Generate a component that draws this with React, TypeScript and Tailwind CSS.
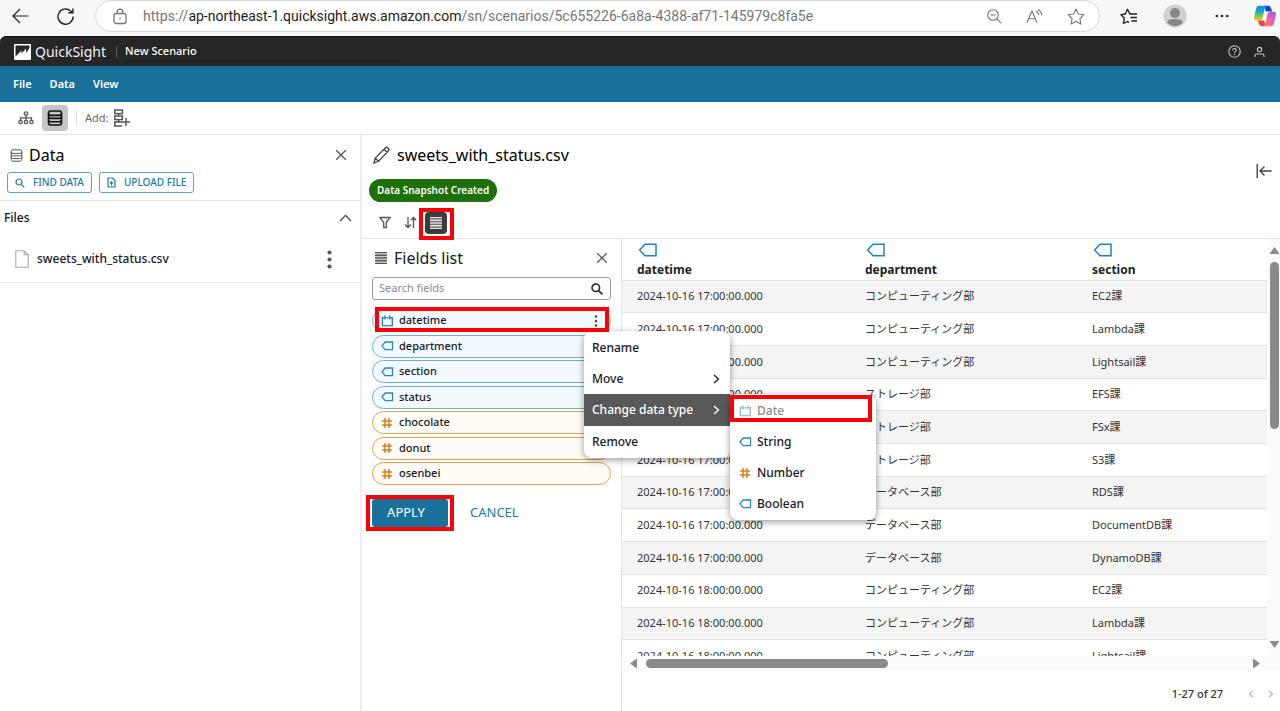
import React, { useState } from 'react';
import clsx from 'clsx';

type FieldType = 'date' | 'string' | 'number';

interface Field {
  name: string;
  type: FieldType;
}

const FIELDS: Field[] = [
  { name: 'datetime', type: 'date' },
  { name: 'department', type: 'string' },
  { name: 'section', type: 'string' },
  { name: 'status', type: 'string' },
  { name: 'chocolate', type: 'number' },
  { name: 'donut', type: 'number' },
  { name: 'osenbei', type: 'number' },
];

const ROWS = [
  ['2024-10-16 17:00:00.000', 'コンピューティング部', 'EC2課'],
  ['2024-10-16 17:00:00.000', 'コンピューティング部', 'Lambda課'],
  ['2024-10-16 17:00:00.000', 'コンピューティング部', 'Lightsail課'],
  ['2024-10-16 17:00:00.000', 'ストレージ部', 'EFS課'],
  ['2024-10-16 17:00:00.000', 'ストレージ部', 'FSx課'],
  ['2024-10-16 17:00:00.000', 'ストレージ部', 'S3課'],
  ['2024-10-16 17:00:00.000', 'データベース部', 'RDS課'],
  ['2024-10-16 17:00:00.000', 'データベース部', 'DocumentDB課'],
  ['2024-10-16 17:00:00.000', 'データベース部', 'DynamoDB課'],
  ['2024-10-16 18:00:00.000', 'コンピューティング部', 'EC2課'],
  ['2024-10-16 18:00:00.000', 'コンピューティング部', 'Lambda課'],
  ['2024-10-16 18:00:00.000', 'コンピューティング部', 'Lightsail課'],
];

interface IconProps {
  className?: string;
}

const Svg: React.FC<IconProps & { w: number; h: number; sw?: number; children: React.ReactNode }> = ({ w, h, sw = 1, className, children }) => (
  <svg
    width={w}
    height={h}
    viewBox={`0 0 ${w} ${h}`}
    fill="none"
    stroke="currentColor"
    strokeWidth={sw}
    className={clsx('shrink-0', className)}
    aria-hidden="true"
  >
    {children}
  </svg>
);

const TagIcon: React.FC<IconProps> = ({ className }) => (
  <Svg w={13} h={10} sw={1.3} className={className}>
    <path d="M4.2 1H11.500v7.600H4.2L1 4.800z" />
  </Svg>
);

const BigTagIcon: React.FC<IconProps> = ({ className }) => (
  <Svg w={20} h={14} sw={1.5} className={className}>
    <path d="M8 1.200H19v11.500H8L2.600 7z" />
  </Svg>
);

const DateIcon: React.FC<IconProps> = ({ className }) => (
  <Svg w={13} h={12} sw={1.4} className={className}>
    <path d="M3.500 2.800H1.400v7.800h9.900V2.800H9.200M5.300 2.800h2.100M4 .4v4M8.700 .4v4" />
  </Svg>
);

const HashIcon: React.FC<IconProps> = ({ className }) => (
  <Svg w={13} h={12} sw={1.500} className={className}>
    <path d="M4 1v10M8 1v10M1 4h10M1 8h10" />
  </Svg>
);

const DatabaseIcon: React.FC<IconProps & { size?: number; sw?: number }> = ({ className, size = 13, sw = 1.2 }) => (
  <svg width={size} height={size} viewBox="0 0 16 16" fill="none" stroke="currentColor" strokeWidth={(sw * 16) / size} className={clsx('shrink-0', className)}>
    <rect x="1.500" y="1" width="13" height="4.400" rx="2.200" />
    <path d="M1.500 3.400v9.400c0 1.200 1 2.200 2.200 2.200h8.600c1.200 0 2.200-1 2.200-2.200V3.400M1.500 6c0 1.600 1 2.400 2.600 2.400h7.800c1.600 0 2.600-.8 2.600-2.400M1.500 9.400c0 1.600 1 2.400 2.600 2.400h7.800c1.600 0 2.600-.8 2.600-2.400" />
  </svg>
);

const CloseIcon: React.FC<IconProps> = ({ className }) => (
  <Svg w={12} h={12} sw={1.3} className={className}>
    <path d="M1.2 1.2l9.6 9.6M10.8 1.2L1.2 10.8" />
  </Svg>
);

const SearchIcon: React.FC<IconProps> = ({ className }) => (
  <Svg w={12} h={12} sw={1.5} className={className}>
    <circle cx="4.8" cy="4.8" r="3.8" />
    <path d="M7.6 7.6l3.8 3.8" />
  </Svg>
);

const ListIcon: React.FC<IconProps> = ({ className }) => (
  <Svg w={14} h={14} sw={1.4} className={className}>
    <path d="M1 1.600h12M1 4.300h12M1 7h12M1 9.700h12M1 12.400h12" />
    <path d="M1.500 3h11M1.500 5.700h11M1.500 8.400h11M1.500 11h11" strokeWidth="1" opacity=".4" />
  </Svg>
);

const ChevronRight: React.FC<IconProps> = ({ className }) => (
  <Svg w={7} h={10} sw={1.3} className={className}>
    <path d="M1 1l4.5 4L1 9" />
  </Svg>
);

const KebabIcon: React.FC<IconProps> = ({ className }) => (
  <svg width="4" height="14" viewBox="0 0 4 14" fill="currentColor" className={className}>
    <circle cx="2" cy="2.500" r="1.200" />
    <circle cx="2" cy="7" r="1.200" />
    <circle cx="2" cy="11.500" r="1.200" />
  </svg>
);

const TypeIcon: React.FC<{ type: FieldType; className?: string }> = ({ type, className }) => {
  if (type === 'date') return <DateIcon className={clsx('text-[#2a85c0]', className)} />;
  if (type === 'string') return <TagIcon className={clsx('text-[#2a85c0]', className)} />;
  return <HashIcon className={clsx('text-[#d38320]', className)} />;
};

// red frame drawn over the controls used in this step
const Highlight: React.FC<IconProps> = ({ className }) => (
  <span className={clsx('absolute z-30 border-4 border-[#fb0007] pointer-events-none', className)} />
);

const BrowserBar = () => (
  <div className="flex items-start h-9 shrink-0 bg-[#f7f7f7] text-[#222]">
    <button type="button" aria-label="Back" className="ml-3 mt-2">
      <Svg w={17} h={16} sw={1.2}>
        <path d="M16.5 8H1M8 1L1 8l7 7" />
      </Svg>
    </button>
    <button type="button" aria-label="Refresh" className="ml-7 mt-2">
      <Svg w={18} h={17} sw={1.4}>
        <path d="M16.200 8.500A7.600 7.600 0 1 1 13.400 2.700L15.600 4.600M15.900.4v4.400h-4.600" />
      </Svg>
    </button>
    <div className="ml-5 mr-5 flex-1 min-w-0 h-8 flex items-center rounded-full border border-[#d6d6d6] bg-white text-[#767676]">
      <Svg w={14} h={17} sw={1.3} className="ml-[17px]">
        <rect x="1" y="5.5" width="12" height="10" rx="2" />
        <path d="M4.2 5.5V4a2.8 2.8 0 0 1 5.6 0v1.5" />
        <circle cx="7" cy="10.5" r=".8" fill="currentColor" stroke="none" />
      </Svg>
      <div className="ml-4 flex-1 min-w-0 truncate font-['Roboto',sans-serif] text-sm">
        https://<span className="text-[#1b1b1b]">ap-northeast-1.quicksight.aws.amazon.com</span>/sn/scenarios/5c655226-6a8a-4388-af71-145979c8fa5e
      </div>
      <div className="flex items-center gap-6 mr-[14px]">
        <button type="button" aria-label="Zoom out">
          <Svg w={15} h={15} sw={1.1}>
            <circle cx="6" cy="6" r="5.3" />
            <path d="M3.4 6h5.2M9.8 9.8l4.6 4.6" />
          </Svg>
        </button>
        <button type="button" aria-label="Read aloud">
          <Svg w={17} h={15} sw={1.1}>
            <path d="M1 13.8L6 2l5 11.8M2.8 9.8h6.4M10 2.200c1.500.8 2.600 2 2.900 4M12 .5c2 1 3.500 3 3.900 6" />
          </Svg>
        </button>
        <button type="button" aria-label="Favorite">
          <Svg w={18} h={17} sw={1.1}>
            <path d="M9 1l2.4 5 5.6.7-4.1 3.8 1 5.5L9 13.4 4.1 16l1-5.5L1 6.7 6.600 6z" strokeLinejoin="round" />
          </Svg>
        </button>
      </div>
    </div>
    <div className="flex items-center h-8">
      <button type="button" aria-label="Favorites">
        <Svg w={18} h={17} sw={1.4}>
          <path d="M11.2 6L9.800 6 7.500 1.300 5.300 6 1 6.700l3.300 3.500-.8 5.300 3.900-2 1.600.8" strokeLinejoin="round" />
          <path d="M11 6h6M10.500 9.500h6.500M11.500 13h5.500" />
        </Svg>
      </button>
      <button type="button" aria-label="Profile" className="ml-[25px]">
        <svg width="24" height="24" viewBox="0 0 24 24">
          <circle cx="12" cy="12" r="11.500" fill="#d2d0ce" />
          <circle cx="12" cy="9" r="5" fill="#8a8683" />
          <path d="M4 18.500c.6-2.400 3.400-3.500 8-3.500s7.400 1.100 8 3.500a11 11 0 0 1-16 0z" fill="#8a8683" />
        </svg>
      </button>
      <button type="button" aria-label="More" className="ml-7">
        <svg width="14" height="4" viewBox="0 0 14 4" fill="currentColor">
          <circle cx="1.800" cy="2" r="1.300" />
          <circle cx="7" cy="2" r="1.300" />
          <circle cx="12.200" cy="2" r="1.300" />
        </svg>
      </button>
      <button type="button" aria-label="Copilot" className="ml-6 mr-[3px]">
        <svg width="24" height="22" viewBox="0 0 24 22">
          <defs>
            <linearGradient id="cpA" x1="0" y1="0" x2="0" y2="1">
              <stop offset="0" stopColor="#0b8bea" />
              <stop offset=".45" stopColor="#23b5b0" />
              <stop offset=".8" stopColor="#b4c832" />
              <stop offset="1" stopColor="#f0c020" />
            </linearGradient>
            <linearGradient id="cpB" x1="1" y1="0" x2="0" y2="1">
              <stop offset="0" stopColor="#9a5cf5" />
              <stop offset=".5" stopColor="#ea5fa8" />
              <stop offset="1" stopColor="#ff9248" />
            </linearGradient>
          </defs>
          <path d="M11 .8h4.500c1.600 0 2.200 1.400 2.800 3.200l.9 2.600H13z" fill="#1746c8" />
          <path d="M6 .8h8c-1.500.6-2 2-2.600 4L9.500 13c-.6 1.800-1.500 2.600-3.500 2.600H4C1.500 15.600.6 14 1.200 11.500L3 4C3.600 1.800 4.500.8 6 .8z" fill="url(#cpA)" />
          <path d="M13 21.200H8.500c-1.500 0-2.200-1.300-2.700-3l-.9-2.600H11z" fill="#e8493c" />
          <path d="M18 21.200h-8c1.500-.6 2-2 2.600-4L14.500 9c.6-1.800 1.500-2.600 3.500-2.600h2c2.500 0 3.400 1.600 2.800 4.100L21 18c-.6 2.200-1.500 3.200-3 3.200z" fill="url(#cpB)" />
        </svg>
      </button>
    </div>
  </div>
);

const AppHeader = () => {
  const [title, setTitle] = useState('New Scenario');
  return (
    <div className="shrink-0 bg-[#f7f7f7]">
      <header className="h-[30px] flex items-center px-3 rounded-t-md border-t border-[#111] bg-[#262626] text-white">
        <svg width="18" height="18" viewBox="0 0 18 18" className="ml-[2px]">
          <rect x="0" y="1" width="17" height="16" rx="1" fill="#fff" />
          <path d="M1.500 2.500h14V5l-3.500 5V5.500L7.500 10.500V7.500l-6 6z" fill="#262626" />
        </svg>
        <span className="ml-[3px] text-sm text-[#f2f2f2]">QuickSight</span>
        <span className="ml-[10px] mr-2 h-3 w-px bg-[#5a5a5a]" />
        <input
          aria-label="Scenario name"
          value={title}
          onChange={(e) => setTitle(e.target.value)}
          className="w-[276px] h-5 pb-[2px] bg-transparent border-b border-[#1a1a1a] text-[11px] font-medium focus:outline-none"
        />
        <div className="ml-auto mr-[3px] flex items-center gap-[13px] text-[#c4c4c4]">
          <button type="button" aria-label="Help">
            <Svg w={13} h={13} sw={1.1}>
              <circle cx="6.500" cy="6.500" r="5.700" />
              <path d="M4.700 5.200c0-1 .8-1.700 1.800-1.700s1.800.7 1.800 1.600c0 1.200-1.800 1.300-1.800 2.600M6.500 8.800v1.200" />
            </Svg>
          </button>
          <button type="button" aria-label="Account">
            <Svg w={11} h={12} sw={1.2}>
              <circle cx="5.500" cy="3.500" r="2.200" />
              <path d="M1 11V9.800c0-1 .8-1.800 1.800-1.800h5.400c1 0 1.800.8 1.800 1.800V11" />
            </Svg>
          </button>
        </div>
      </header>
    </div>
  );
};

const Toolbar = () => (
  <div className="h-[33px] shrink-0 flex items-center px-[18px] border-b border-[#e3e3e3] text-[#555]">
    <button type="button" aria-label="Analysis map">
      <Svg w={16} h={14} sw={1.3}>
        <circle cx="8" cy="2.500" r="1.700" />
        <circle cx="2.500" cy="11" r="1.700" />
        <circle cx="8" cy="11" r="1.700" />
        <circle cx="13.500" cy="11" r="1.700" />
        <path d="M8 4.200v5.100M2.500 9.300V6.800h11v2.500" />
      </Svg>
    </button>
    <button type="button" aria-label="Data" className="ml-2 w-[26px] h-[26px] flex items-center justify-center rounded bg-[#c4c4c4] text-[#111]">
      <DatabaseIcon size={16} sw={1.6} />
    </button>
    <span className="ml-2 mr-2 h-4 w-px bg-[#ddd]" />
    <span className="text-[11px] text-[#666]">Add:</span>
    <button type="button" aria-label="Add block" className="ml-1">
      <Svg w={18} h={18} sw={1.5}>
        <rect x="1.800" y="1" width="7.600" height="3.600" />
        <rect x="1.800" y="7" width="7.600" height="3.600" />
        <path d="M5.600 4.600v2.400M5.600 10.600v2.400M9.400 13H1.800v4H9M13 9v8M9 13h8" />
      </Svg>
    </button>
  </div>
);

const DataPanel = () => (
  <aside className="w-[362px] shrink-0 border-r-2 border-[#eeeeee]">
    <div className="h-[66px] px-[7px] pt-2 border-b border-[#e3e3e3]">
      <div className="flex items-center h-6 pl-[3px] pr-[6px]">
        <DatabaseIcon size={13} sw={1} className="text-[#555]" />
        <h2 className="ml-[6px] text-base text-black">Data</h2>
        <button type="button" aria-label="Close data panel" className="ml-auto text-[#555]">
          <CloseIcon />
        </button>
      </div>
      <div className="mt-[5px] flex gap-[7px] text-[#1b7ba6]">
        <button type="button" className="h-[21px] px-[7px] flex items-center rounded-[3px] border border-[#5ea3c2] text-[10px] font-medium">
          <Svg w={10} h={10} sw={1.200}>
            <circle cx="4" cy="4" r="3" />
            <path d="M6.300 6.300l3 3" />
          </Svg>
          <span className="ml-2">FIND DATA</span>
        </button>
        <button type="button" className="h-[21px] px-[7px] flex items-center rounded-[3px] border border-[#5ea3c2] text-[10px] font-medium">
          <Svg w={9} h={11} sw={1.200}>
            <path d="M1 1h4.500L8 3.500V10H1zM4.500 8.500V5M3 6.300L4.500 4.800 6 6.300" />
          </Svg>
          <span className="ml-2">UPLOAD FILE</span>
        </button>
      </div>
    </div>
    <div className="h-[82px] pl-1 border-b border-[#e3e3e3]">
      <div className="h-[34px] flex items-center justify-between pr-2">
        <h3 className="text-xs font-medium text-[#111]">Files</h3>
        <button type="button" aria-label="Collapse files" className="text-[#444]">
          <Svg w={13} h={8} sw={1.300}>
            <path d="M1 7l5.500-5.600L12 7" />
          </Svg>
        </button>
      </div>
      <div className="h-12 flex items-center pl-[11px] pr-7">
        <Svg w={14} h={18} sw={1.100} className="text-[#aaa]">
          <path d="M.8.8h8.400l4 4v12.400H.8zM9.200.8v4h4" />
        </Svg>
        <a href="#file" className="ml-2 text-xs font-medium text-[#16191f]">sweets_with_status.csv</a>
        <button type="button" aria-label="File options" className="ml-auto text-[#555]">
          <svg width="5" height="19" viewBox="0 0 5 19" fill="currentColor">
            <circle cx="2.500" cy="2.500" r="2.100" />
            <circle cx="2.500" cy="9.500" r="2.100" />
            <circle cx="2.500" cy="16.500" r="2.100" />
          </svg>
        </button>
      </div>
    </div>
  </aside>
);

const TYPE_OPTIONS: { label: string; type: FieldType; disabled?: boolean }[] = [
  { label: 'Date', type: 'date', disabled: true },
  { label: 'String', type: 'string' },
  { label: 'Number', type: 'number' },
  { label: 'Boolean', type: 'string' },
];

const FieldMenu = () => (
  <div className="absolute z-20 left-[211px] top-[21px]">
    <ul className="w-[146px] py-px rounded-lg bg-white shadow-[0_2px_7px_rgba(0,0,0,0.4)] text-xs font-medium text-[#16191f]">
      <li>
        <button type="button" className="w-full h-[31px] px-2 text-left">Rename</button>
      </li>
      <li>
        <button type="button" className="w-full h-[31px] pl-2 pr-[10px] flex items-center justify-between">
          Move <ChevronRight />
        </button>
      </li>
      <li>
        <button type="button" className="w-full h-8 pl-2 pr-[10px] flex items-center justify-between bg-[#595959] text-white">
          Change data type <ChevronRight />
        </button>
      </li>
      <li>
        <button type="button" className="w-full h-[31px] px-2 text-left">Remove</button>
      </li>
    </ul>
    <div className="absolute left-[146px] top-[63px]">
      <ul className="w-[146px] py-px rounded-lg bg-white shadow-[0_2px_7px_rgba(0,0,0,0.4)] text-xs font-medium text-[#16191f]">
        {TYPE_OPTIONS.map((opt) => (
          <li key={opt.label}>
            <button type="button" disabled={opt.disabled} className="w-full h-[31px] px-[9px] flex items-center gap-[5px] disabled:text-[#8a8a8a]">
              <TypeIcon type={opt.type} className={opt.disabled ? 'opacity-50' : ''} />
              {opt.label}
            </button>
          </li>
        ))}
      </ul>
      <Highlight className="left-0 top-px w-[142px] h-[27px]" />
    </div>
  </div>
);

const FieldsPanel = () => {
  const [search, setSearch] = useState('');
  const visible = FIELDS.filter((f) => f.name.includes(search));

  return (
    <div className="w-[260px] shrink-0 pl-[10px] pr-[10px] border-r border-[#e3e3e3]">
      <div className="h-[38px] flex items-center pl-[2px] pr-[3px]">
        <ListIcon className="text-[#555]" />
        <h2 className="ml-[6px] text-base text-[#16191f]">Fields list</h2>
        <button type="button" aria-label="Close fields list" className="ml-auto text-[#555]">
          <CloseIcon />
        </button>
      </div>
      <div className="h-[23px] flex items-center px-[6px] rounded-[3px] border border-[#999]">
        <input
          type="text"
          aria-label="Search fields"
          placeholder="Search fields"
          value={search}
          onChange={(e) => setSearch(e.target.value)}
          className="flex-1 min-w-0 text-[11px] placeholder:text-[#8c8c8c] focus:outline-none"
        />
        <SearchIcon className="mr-px text-[#222]" />
      </div>

      <ul className="mt-[9px] h-[176px] flex flex-col justify-between">
        {visible.map((f) => (
          <li
            key={f.name}
            className={clsx(
              'relative h-[23px] flex items-center pl-2 pr-3 rounded-full border text-[11px] font-medium text-[#16191f]',
              f.type === 'number' ? 'border-[#e0a350] bg-[#fffcf7]' : 'border-[#6cb0da] bg-[#f3faff]'
            )}
          >
            <TypeIcon type={f.type} />
            <span className="ml-[5px]">{f.name}</span>
            {f.type === 'date' && (
              <>
                <button type="button" aria-label="Field options" className="ml-auto text-[#444]">
                  <KebabIcon />
                </button>
                <Highlight className="left-[2px] -top-[3px] w-[234px] h-[25px]" />
                <FieldMenu />
              </>
            )}
          </li>
        ))}
      </ul>

      <div className="mt-[14px] flex items-center text-[13px]">
        <div className="relative">
          <button type="button" className="w-[76px] h-7 pr-2 rounded-[3px] bg-[#19719a] text-white">APPLY</button>
          <Highlight className="-left-[6px] -top-1 w-[88px] h-9" />
        </div>
        <button type="button" className="ml-[22px] text-[#1b7ba6]">CANCEL</button>
      </div>
    </div>
  );
};

const DataTable = () => (
  <div className="flex-1 min-w-0 flex flex-col">
    <div className="flex-1 min-h-0 flex">
      <div className="flex-1 min-w-0 overflow-hidden">
        <table className="w-full h-[434px] table-fixed text-[11px] text-[#333]">
          <thead>
            <tr className="h-[41px] border-b border-[#e3e3e3]">
              {['datetime', 'department', 'section'].map((col) => (
                <th key={col} className="w-[228px] even:w-[227px] last:w-auto pl-[15px] text-left align-top text-xs font-bold text-[#222]">
                  <BigTagIcon className="mt-1 text-[#1f83c0]" />
                  <span className="block mt-[5px] leading-4">{col}</span>
                </th>
              ))}
            </tr>
          </thead>
          <tbody>
            {ROWS.map((row, i) => (
              <tr key={i} className="h-8 border-b border-[#e3e3e3] odd:bg-[#f4f4f4]">
                {row.map((cell, j) => (
                  <td key={j} className="pl-[15px] whitespace-nowrap">{cell}</td>
                ))}
              </tr>
            ))}
          </tbody>
        </table>
      </div>
      <div className="w-[13px] shrink-0 flex flex-col items-center pt-2 bg-[#fbfbfb] text-[#8a8a8a]">
        <svg width="9" height="7" viewBox="0 0 9 7" fill="currentColor" className="ml-[2px]"><path d="M4.500 0L9 6.200V7H0v-.8z" /></svg>
        <span className="mt-2 ml-[2px] w-[9px] h-[167px] rounded-full bg-[#8a8a8a]" />
        <svg width="9" height="7" viewBox="0 0 9 7" fill="currentColor" className="mt-auto mb-2 ml-[2px]"><path d="M4.500 7L9 .8V0H0v.8z" /></svg>
      </div>
    </div>
    <div className="h-[15px] shrink-0 flex items-center pl-2 pr-[20px] bg-[#fbfbfb] text-[#8a8a8a]">
      <svg width="7" height="9" viewBox="0 0 7 9" fill="currentColor"><path d="M0 4.500L6.200 0H7v9h-.8z" /></svg>
      <span className="ml-[9px] w-[242px] h-[9px] rounded-full bg-[#8a8a8a]" />
      <svg width="7" height="9" viewBox="0 0 7 9" fill="currentColor" className="ml-auto"><path d="M7 4.500L.8 0H0v9h.8z" /></svg>
    </div>
    <div className="h-10 shrink-0 flex items-center justify-end pt-[6px] pr-[6px] text-[11px] font-medium text-[#333]">
      <span>1-27 of 27</span>
      <button type="button" aria-label="Previous page" className="ml-[25px] text-[#b5b5b5]">
        <Svg w={6} h={8} sw={1.200}><path d="M5 .8L1.500 4 5 7.200" /></Svg>
      </button>
      <button type="button" aria-label="Next page" className="ml-[14px] text-[#b5b5b5]">
        <Svg w={6} h={8} sw={1.200}><path d="M1 .8L4.500 4 1 7.200" /></Svg>
      </button>
    </div>
  </div>
);

const App: React.FC = () => {
  return (
    <div className="h-screen flex flex-col overflow-hidden bg-white font-['Noto_Sans','Noto_Sans_CJK_JP',sans-serif]">
      <BrowserBar />
      <AppHeader />
      <nav className="h-9 shrink-0 flex items-center gap-[18px] px-[13px] bg-[#19719a] text-[11px] font-semibold text-white">
        <a href="#file">File</a>
        <a href="#data">Data</a>
        <a href="#view">View</a>
      </nav>
      <Toolbar />

      <div className="flex-1 min-h-0 flex bg-white">
        <DataPanel />
        <main className="flex-1 min-w-0 flex flex-col">
          <div className="h-[104px] shrink-0 flex items-start border-b border-[#e3e3e3]">
            <div className="pl-[7px]">
              <div className="flex items-center h-10 pl-1">
                <Svg w={17} h={18} sw={1.300} className="text-[#444]">
                  <path d="M1 17l1.200-5L12.500 1.800c.6-.6 1.400-.6 2 0l1 1c.6.6.6 1.400 0 2L5.500 15.300zM11 3.300l3.200 3.200M2.200 12l3.300 3.300" />
                </Svg>
                <h1 className="ml-[7px] text-base text-black">sweets_with_status.csv</h1>
              </div>
              <div className="mt-1 w-fit h-[23px] px-2 flex items-center rounded-full bg-[#1d700c] text-[10px] font-semibold text-white">
                Data Snapshot Created
              </div>
              <div className="mt-[9px] pl-[10px] flex items-center h-[23px] text-[#555]">
                <button type="button" aria-label="Filter">
                  <Svg w={12} h={13} sw={1.300}>
                    <path d="M1 1.500h10L7.300 6.500v5H4.700v-5z" />
                  </Svg>
                </button>
                <button type="button" aria-label="Sort" className="ml-[13px]">
                  <Svg w={13} h={13} sw={1.300}>
                    <path d="M4 1v10.500M1 8.500l3 3 3-3M9.500 12V1.500M6.800 4.200l2.700-2.700 2.700 2.700" />
                  </Svg>
                </button>
                <div className="relative ml-2">
                  <button type="button" aria-label="Fields list" className="w-[22px] h-[22px] flex items-center justify-center rounded bg-[#3c3c3c] text-[#e6e6e6]">
                    <ListIcon />
                  </button>
                  <Highlight className="-left-[6px] -top-[4px] w-[35px] h-8" />
                </div>
              </div>
            </div>
            <button type="button" aria-label="Collapse panel" className="ml-auto mr-2 mt-[29px] text-[#444]">
              <Svg w={16} h={14} sw={1.400}>
                <path d="M1.200 0v14M15.500 7H4M8.500 2.500L4 7l4.500 4.500" />
              </Svg>
            </button>
          </div>
          <div className="flex-1 min-h-0 flex">
            <FieldsPanel />
            <DataTable />
          </div>
        </main>
      </div>
    </div>
  );
};

export default App;
